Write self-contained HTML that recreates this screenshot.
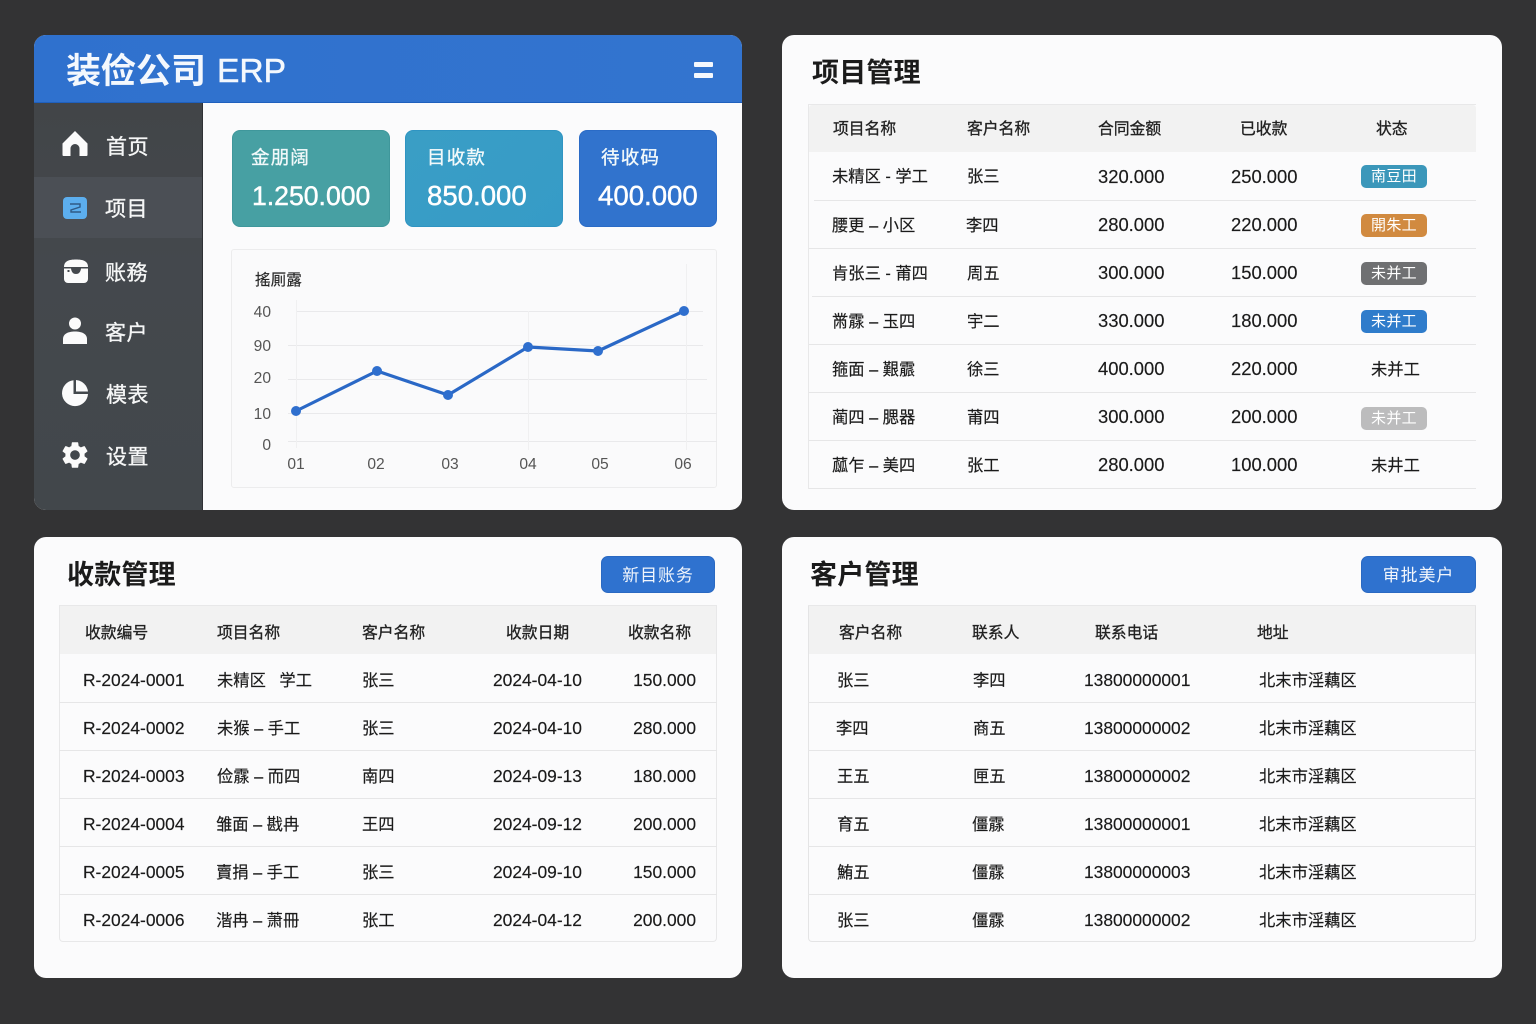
<!DOCTYPE html>
<html lang="zh"><head><meta charset="utf-8"><title>ERP</title>
<style>
html,body{margin:0;padding:0}
body{width:1536px;height:1024px;overflow:hidden;background:#333334;position:relative;font-family:"Liberation Sans","Noto Sans CJK SC",sans-serif;color:#161616}
.a,.t,.p{position:absolute}
.t{white-space:nowrap;line-height:24px;font-size:16.3px;color:#1a1a1a;transform:translateY(1px);-webkit-text-stroke:.15px #1a1a1a}
.h{font-size:15.8px;color:#222;transform:translateY(2px);-webkit-text-stroke:.3px #222}
.n{font-size:18.4px;transform:none}
.m{font-size:17.4px;transform:none}
.r{text-align:right}
.c{text-align:center}
.p{background:#fbfbfc;overflow:hidden}
.title{font-size:27px;font-weight:bold;line-height:36px;letter-spacing:.2px;color:#1b1b1b;-webkit-text-stroke:0}
.nav{font-size:21px;color:#f5f6f6;font-weight:normal;letter-spacing:.5px;-webkit-text-stroke:.35px #f5f6f6;transform:translateY(2px)}
.card{border-radius:8px;color:#fff}
.lb{font-size:18.5px;color:#f2f9fa;letter-spacing:1.2px;-webkit-text-stroke:.35px #f2f9fa}
.val{font-size:27.6px;color:#fff;-webkit-text-stroke:.45px #fff;transform:none}
.line{height:1px;background:#e6e6e7}
.hd{background:#f2f2f2}
.bd{background:#e8e8e9}
.badge{left:1361px;width:66px;height:23px;border-radius:5px;color:#fff;font-size:15px;line-height:23px;text-align:center;letter-spacing:.3px}
.btn{background:#2f72cf;border:1px solid #2a69c2;box-sizing:border-box;border-radius:7px;color:#f2f6fc;font-size:17px;line-height:37px;text-align:center;letter-spacing:.9px}
.ax{font-size:15.6px;color:#555;transform:translateY(2px);-webkit-text-stroke:0}
</style></head><body>

<!-- Panel 1 -->
<div class="p" style="left:34px;top:35px;width:708px;height:475px;border-radius:12px"></div>
<div class="a" style="left:34px;top:35px;width:708px;height:68px;background:linear-gradient(90deg,#2f71ce,#3374cf);border-radius:12px 12px 0 0;border-bottom:1px solid #1f60bd;box-sizing:border-box"></div>
<div class="t" style="left:66px;top:47px;line-height:48px;font-size:35px;font-weight:bold;color:#f4f8fd;-webkit-text-stroke:0">装俭公司</div>
<div class="t" style="left:217px;top:47px;line-height:48px;font-size:33.6px;color:#f4f8fd;-webkit-text-stroke:.5px #f4f8fd">ERP</div>
<div class="a" style="left:694px;top:62px;width:19px;height:5px;background:#f5f8fd;border-radius:1px"></div>
<div class="a" style="left:694px;top:73px;width:19px;height:5px;background:#f5f8fd;border-radius:1px"></div>

<div class="a" style="left:34px;top:103px;width:169px;height:407px;background:linear-gradient(180deg,#424548,#44484d 40%,#42474b);border-radius:0 0 0 12px;border-right:1px solid #2f3135;box-sizing:border-box"></div>
<div class="a" style="left:34px;top:177px;width:168px;height:61px;background:#4b4f55"></div>

<!-- Sidebar icons -->
<svg class="a" style="left:60px;top:129px" width="30" height="30" viewBox="0 0 30 30"><path fill="#fbfbfb" d="M15 2 L27.5 14.5 V26 a1 1 0 0 1 -1 1 H19.5 V19.5 a4.5 4.5 0 0 0 -9 0 V27 H3.5 a1 1 0 0 1 -1 -1 V14.5 Z"/></svg>
<svg class="a" style="left:62px;top:196px" width="26" height="24" viewBox="0 0 26 24"><rect x="1" y="1" width="24" height="22" rx="4" fill="#5caeee"/><path d="M8 8 H18 V11 L9 14 V16 H19" fill="none" stroke="#2f5a86" stroke-width="1.4"/></svg>
<svg class="a" style="left:62px;top:258px" width="28" height="26" viewBox="0 0 28 26"><path fill="#fbfbfb" d="M2 9 C2 3 7 1.5 14 1.5 C21 1.5 26 3 26 9 Z"/><path fill="#fbfbfb" d="M2 10.5 H9 C9.5 14.5 11.5 16 14 16 C16.5 16 18.5 14.5 19 10.5 H26 V21 a4 4 0 0 1 -4 4 H6 a4 4 0 0 1 -4 -4 Z"/><rect x="5.5" y="12" width="2" height="2" fill="#44484d"/></svg>
<svg class="a" style="left:62px;top:316px" width="26" height="30" viewBox="0 0 26 30"><circle cx="13" cy="7.5" r="6" fill="#fbfbfb"/><path fill="#fbfbfb" d="M1 28 V23 C1 18 6 15.5 13 15.5 C20 15.5 25 18 25 23 V28 Z"/></svg>
<svg class="a" style="left:61px;top:379px" width="28" height="28" viewBox="0 0 28 28"><path fill="#fbfbfb" d="M12.5 1.2 V15 H27 A13 13 0 1 1 12.5 1.2 Z"/><path fill="#fbfbfb" d="M15 1 A13 13 0 0 1 27 12.5 H15 Z"/></svg>
<svg class="a" style="left:59px;top:439px" width="32" height="32" viewBox="0 0 24 24"><path fill="#fbfbfb" d="M19.14 12.94c.04-.3.06-.61.06-.94 0-.32-.02-.64-.07-.94l2.03-1.58c.18-.14.23-.41.12-.61l-1.92-3.32c-.12-.22-.37-.29-.59-.22l-2.39.96c-.5-.38-1.03-.7-1.62-.94l-.36-2.54c-.04-.24-.24-.41-.48-.41h-3.84c-.24 0-.43.17-.47.41l-.36 2.54c-.59.24-1.13.57-1.62.94l-2.39-.96c-.22-.08-.47 0-.59.22L2.74 8.87c-.12.21-.08.47.12.61l2.03 1.58c-.05.3-.09.63-.09.94s.02.64.07.94l-2.03 1.58c-.18.14-.23.41-.12.61l1.92 3.32c.12.22.37.29.59.22l2.39-.96c.5.38 1.03.7 1.62.94l.36 2.54c.05.24.24.41.48.41h3.84c.24 0 .44-.17.47-.41l.36-2.54c.59-.24 1.13-.56 1.62-.94l2.39.96c.22.08.47 0 .59-.22l1.92-3.32c.12-.22.07-.47-.12-.61l-2.01-1.58zM12 15.6c-1.98 0-3.6-1.62-3.6-3.6s1.62-3.6 3.6-3.6 3.6 1.62 3.6 3.6-1.62 3.6-3.6 3.6z"/></svg>

<div class="t nav" style="left:106px;top:134px">首页</div>
<div class="t nav" style="left:105px;top:196px">项目</div>
<div class="t nav" style="left:105px;top:260px">账務</div>
<div class="t nav" style="left:105px;top:320px">客户</div>
<div class="t nav" style="left:106px;top:382px">模表</div>
<div class="t nav" style="left:106px;top:444px">设置</div>

<!-- Stat cards -->
<div class="a card" style="left:232px;top:130px;width:158px;height:97px;background:#47a0a3;border:1px solid #3f979b;box-sizing:border-box"></div>
<div class="a card" style="left:405px;top:130px;width:158px;height:97px;background:linear-gradient(135deg,#3a9ec5,#369bc7);border:1px solid #2f94c2;box-sizing:border-box"></div>
<div class="a card" style="left:579px;top:130px;width:138px;height:97px;background:#3173cd;border:1px solid #2a6bc6;box-sizing:border-box"></div>
<div class="t lb" style="left:251px;top:145px">金朋阔</div>
<div class="t lb" style="left:427px;top:145px">目收款</div>
<div class="t lb" style="left:601px;top:145px">待收码</div>
<div class="t val" style="left:252px;top:184px;font-size:26.6px">1.250.000</div>
<div class="t val" style="left:427px;top:184px">850.000</div>
<div class="t val" style="left:598px;top:184px">400.000</div>

<!-- Chart -->
<div class="a" style="left:231px;top:249px;width:486px;height:239px;background:#fafafb;border:1px solid #ececed;box-sizing:border-box;border-radius:3px"></div>
<div class="t" style="left:255px;top:268px;font-size:15.6px;color:#2a2a2a">搖厠露</div>
<svg class="a" style="left:231px;top:249px" width="486" height="239" viewBox="231 249 486 239">
<g stroke="#e9e9eb" stroke-width="1" fill="none">
<path d="M296 311.5H703M288 345.5H703M288 379.5H707M288 413.5H717M288 441.5H717"/>
<path stroke="#f0f0f1" d="M296.5 300V448M528.5 311V450M686.5 264V450"/>
</g>
<polyline points="296,411 377,371 448,395 528,347 598,351 684,311" fill="none" stroke="#2a68c6" stroke-width="3.2" stroke-linejoin="round"/>
<g fill="#2f6fce"><circle cx="296" cy="411" r="5"/><circle cx="377" cy="371" r="5"/><circle cx="448" cy="395" r="5"/><circle cx="528" cy="347" r="5"/><circle cx="598" cy="351" r="5"/><circle cx="684" cy="311" r="5"/></g>
</svg>
<div class="t ax r" style="left:231px;width:40px;top:299px">40</div>
<div class="t ax r" style="left:231px;width:40px;top:333px">90</div>
<div class="t ax r" style="left:231px;width:40px;top:365px">20</div>
<div class="t ax r" style="left:231px;width:40px;top:401px">10</div>
<div class="t ax r" style="left:231px;width:40px;top:432px">0</div>
<div class="t ax c" style="left:276px;width:40px;top:451px">01</div>
<div class="t ax c" style="left:356px;width:40px;top:451px">02</div>
<div class="t ax c" style="left:430px;width:40px;top:451px">03</div>
<div class="t ax c" style="left:508px;width:40px;top:451px">04</div>
<div class="t ax c" style="left:580px;width:40px;top:451px">05</div>
<div class="t ax c" style="left:663px;width:40px;top:451px">06</div>

<!-- Panel 2 -->
<div class="p" style="left:782px;top:35px;width:720px;height:475px;border-radius:12px"></div>
<div class="t title" style="left:812px;top:54px">项目管理</div>
<div class="a bd" style="left:808px;top:104px;width:668px;height:1px"></div>
<div class="a hd" style="left:809px;top:105px;width:667px;height:47px;border-radius:3px 3px 0 0"></div>
<div class="a bd" style="left:808px;top:104px;width:1px;height:385px"></div>
<div class="a line" style="left:814px;top:200px;width:662px"></div>
<div class="a line" style="left:809px;top:248px;width:667px"></div>
<div class="a line" style="left:812px;top:296px;width:664px"></div>
<div class="a line" style="left:809px;top:344px;width:667px"></div>
<div class="a line" style="left:809px;top:392px;width:667px"></div>
<div class="a line" style="left:809px;top:440px;width:667px"></div>
<div class="a line" style="left:809px;top:488px;width:667px"></div>
<div class="t h" style="left:833px;top:116px">项目名称</div>
<div class="t h" style="left:967px;top:116px">客户名称</div>
<div class="t h" style="left:1098px;top:116px">合同金额</div>
<div class="t h" style="left:1240px;top:116px">已收款</div>
<div class="t h" style="left:1376px;top:116px">状态</div>

<div class="t" style="left:832px;top:164px">未精区 - 学工</div><div class="t" style="left:967px;top:164px">张三</div><div class="t n" style="left:1098px;top:165px">320.000</div><div class="t n" style="left:1231px;top:165px">250.000</div>
<div class="t" style="left:832px;top:213px">腰更 – 小区</div><div class="t" style="left:966px;top:213px">李四</div><div class="t n" style="left:1098px;top:213px">280.000</div><div class="t n" style="left:1231px;top:213px">220.000</div>
<div class="t" style="left:832px;top:261px">肯张三 - 莆四</div><div class="t" style="left:967px;top:261px">周五</div><div class="t n" style="left:1098px;top:261px">300.000</div><div class="t n" style="left:1231px;top:261px">150.000</div>
<div class="t" style="left:832px;top:309px">黹霡 – 玉四</div><div class="t" style="left:967px;top:309px">宇二</div><div class="t n" style="left:1098px;top:309px">330.000</div><div class="t n" style="left:1231px;top:309px">180.000</div>
<div class="t" style="left:832px;top:357px">箍面 – 艱霢</div><div class="t" style="left:967px;top:357px">徐三</div><div class="t n" style="left:1098px;top:357px">400.000</div><div class="t n" style="left:1231px;top:357px">220.000</div>
<div class="t" style="left:832px;top:405px">蔺四 – 腮器</div><div class="t" style="left:967px;top:405px">莆四</div><div class="t n" style="left:1098px;top:405px">300.000</div><div class="t n" style="left:1231px;top:405px">200.000</div>
<div class="t" style="left:832px;top:453px">蓏乍 – 美四</div><div class="t" style="left:967px;top:453px">张工</div><div class="t n" style="left:1098px;top:453px">280.000</div><div class="t n" style="left:1231px;top:453px">100.000</div>

<div class="a badge" style="top:165px;background:#3b97ba">南豆田</div>
<div class="a badge" style="top:214px;background:#d18a40">開朱工</div>
<div class="a badge" style="top:262px;background:#6f7072">未并工</div>
<div class="a badge" style="top:310px;background:#2f7ccb">未并工</div>
<div class="t" style="left:1371px;top:357px;font-size:16.3px">未并工</div>
<div class="a badge" style="top:407px;background:#bcbcbd">未并工</div>
<div class="t" style="left:1371px;top:453px;font-size:16.3px">未井工</div>

<!-- Panel 3 -->
<div class="p" style="left:34px;top:537px;width:708px;height:441px;border-radius:12px"></div>
<div class="t title" style="left:67px;top:556px">收款管理</div>
<div class="a btn" style="left:601px;top:556px;width:114px;height:37px">新目账务</div>
<div class="a bd" style="left:59px;top:605px;width:658px;height:1px"></div>
<div class="a hd" style="left:59px;top:606px;width:658px;height:48px"></div>
<div class="a" style="left:59px;top:606px;width:658px;height:336px;border:1px solid #e8e8e9;box-sizing:border-box;border-top:0;border-radius:0 0 4px 4px"></div>
<div class="a line" style="left:59px;top:702px;width:658px"></div>
<div class="a line" style="left:59px;top:750px;width:658px"></div>
<div class="a line" style="left:59px;top:798px;width:658px"></div>
<div class="a line" style="left:59px;top:846px;width:658px"></div>
<div class="a line" style="left:59px;top:894px;width:658px"></div>
<div class="t h" style="left:85px;top:620px">收款编号</div>
<div class="t h" style="left:217px;top:620px">项目名称</div>
<div class="t h" style="left:362px;top:620px">客户名称</div>
<div class="t h" style="left:506px;top:620px">收款日期</div>
<div class="t h" style="left:628px;top:620px">收款名称</div>

<div class="t m" style="left:83px;top:668px">R-2024-0001</div><div class="t" style="left:217px;top:668px">未精区&nbsp;&nbsp;&nbsp;学工</div><div class="t" style="left:362px;top:668px">张三</div><div class="t m" style="left:493px;top:668px">2024-04-10</div><div class="t m r" style="left:596px;width:100px;top:668px">150.000</div>
<div class="t m" style="left:83px;top:716px">R-2024-0002</div><div class="t" style="left:217px;top:716px">未猴 – 手工</div><div class="t" style="left:362px;top:716px">张三</div><div class="t m" style="left:493px;top:716px">2024-04-10</div><div class="t m r" style="left:596px;width:100px;top:716px">280.000</div>
<div class="t m" style="left:83px;top:764px">R-2024-0003</div><div class="t" style="left:217px;top:764px">俭霡 – 而四</div><div class="t" style="left:362px;top:764px">南四</div><div class="t m" style="left:493px;top:764px">2024-09-13</div><div class="t m r" style="left:596px;width:100px;top:764px">180.000</div>
<div class="t m" style="left:83px;top:812px">R-2024-0004</div><div class="t" style="left:216px;top:812px">雏面 – 戡冉</div><div class="t" style="left:362px;top:812px">王四</div><div class="t m" style="left:493px;top:812px">2024-09-12</div><div class="t m r" style="left:596px;width:100px;top:812px">200.000</div>
<div class="t m" style="left:83px;top:860px">R-2024-0005</div><div class="t" style="left:216px;top:860px">賣捐 – 手工</div><div class="t" style="left:362px;top:860px">张三</div><div class="t m" style="left:493px;top:860px">2024-09-10</div><div class="t m r" style="left:596px;width:100px;top:860px">150.000</div>
<div class="t m" style="left:83px;top:908px">R-2024-0006</div><div class="t" style="left:216px;top:908px">湝冉 – 萧冊</div><div class="t" style="left:362px;top:908px">张工</div><div class="t m" style="left:493px;top:908px">2024-04-12</div><div class="t m r" style="left:596px;width:100px;top:908px">200.000</div>

<!-- Panel 4 -->
<div class="p" style="left:782px;top:537px;width:720px;height:441px;border-radius:12px"></div>
<div class="t title" style="left:810px;top:556px">客户管理</div>
<div class="a btn" style="left:1361px;top:556px;width:115px;height:37px">审批美户</div>
<div class="a bd" style="left:808px;top:605px;width:668px;height:1px"></div>
<div class="a hd" style="left:808px;top:606px;width:668px;height:48px"></div>
<div class="a" style="left:808px;top:606px;width:668px;height:336px;border:1px solid #e4e4e5;box-sizing:border-box;border-top:0;border-radius:0 0 4px 4px"></div>
<div class="a line" style="left:808px;top:702px;width:668px"></div>
<div class="a line" style="left:808px;top:750px;width:668px"></div>
<div class="a line" style="left:808px;top:798px;width:668px"></div>
<div class="a line" style="left:808px;top:846px;width:668px"></div>
<div class="a line" style="left:808px;top:894px;width:668px"></div>
<div class="t h" style="left:839px;top:620px">客户名称</div>
<div class="t h" style="left:972px;top:620px">联系人</div>
<div class="t h" style="left:1095px;top:620px">联系电话</div>
<div class="t h" style="left:1257px;top:620px">地址</div>

<div class="t" style="left:837px;top:668px">张三</div><div class="t" style="left:973px;top:668px">李四</div><div class="t m" style="left:1084px;top:668px">13800000001</div><div class="t" style="left:1259px;top:668px">北末市淫藕区</div>
<div class="t" style="left:836px;top:716px">李四</div><div class="t" style="left:973px;top:716px">商五</div><div class="t m" style="left:1084px;top:716px">13800000002</div><div class="t" style="left:1259px;top:716px">北末市淫藕区</div>
<div class="t" style="left:837px;top:764px">王五</div><div class="t" style="left:973px;top:764px">匣五</div><div class="t m" style="left:1084px;top:764px">13800000002</div><div class="t" style="left:1259px;top:764px">北末市淫藕区</div>
<div class="t" style="left:837px;top:812px">育五</div><div class="t" style="left:972px;top:812px">僵霡</div><div class="t m" style="left:1084px;top:812px">13800000001</div><div class="t" style="left:1259px;top:812px">北末市淫藕区</div>
<div class="t" style="left:837px;top:860px">鮪五</div><div class="t" style="left:972px;top:860px">僵霡</div><div class="t m" style="left:1084px;top:860px">13800000003</div><div class="t" style="left:1259px;top:860px">北末市淫藕区</div>
<div class="t" style="left:837px;top:908px">张三</div><div class="t" style="left:972px;top:908px">僵霡</div><div class="t m" style="left:1084px;top:908px">13800000002</div><div class="t" style="left:1259px;top:908px">北末市淫藕区</div>
</body></html>
